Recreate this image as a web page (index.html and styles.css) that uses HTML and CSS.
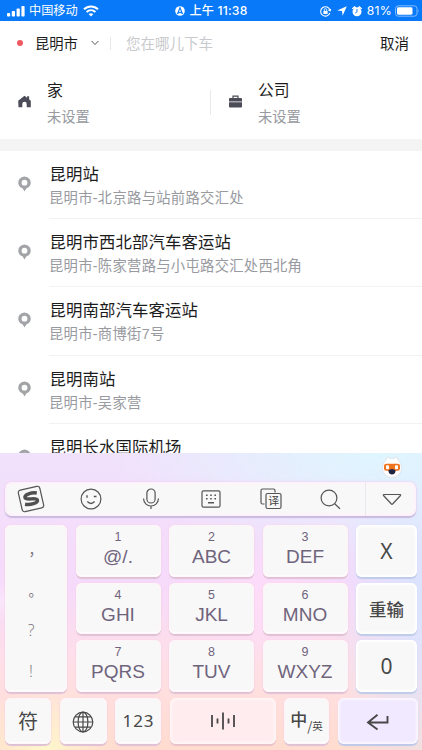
FILE: index.html
```html
<!DOCTYPE html>
<html lang="zh-CN">
<head>
<meta charset="utf-8">
<title>选择下车地点</title>
<link rel="stylesheet" href="styles.css">
</head>
<body>
<div class="screen">
  <header class="status">
    <div class="status-left">
      <svg width="19" height="12" viewBox="0 0 19 12" fill="#fff"><rect x="0" y="8" width="3.2" height="3.5" rx=".8"/><rect x="4.8" y="6" width="3.2" height="5.5" rx=".8"/><rect x="9.6" y="3.5" width="3.2" height="8" rx=".8"/><rect x="14.4" y="1" width="3.2" height="10.5" rx=".8"/></svg>
      <span class="carrier">中国移动</span>
      <svg class="wifi" width="16" height="12" viewBox="0 0 16 12" fill="none" stroke="#fff" stroke-width="2"><path d="M1 4.3C5 .4 11 .4 15 4.3M3.6 7C6.2 4.6 9.8 4.6 12.4 7"/><path d="M8 11.4 5.6 9C7 7.9 9 7.9 10.4 9z" fill="#fff" stroke="none"/></svg>
    </div>
    <div class="status-time">
      <svg width="10" height="10" viewBox="0 0 10 10"><circle cx="5" cy="5" r="4.8" fill="#fff"/><path d="M5 1.8 7.3 7.4 5 6.2 2.7 7.4z" fill="none" stroke="#0879f8" stroke-width="1.1"/></svg>
      <span>上午 11:38</span>
    </div>
    <div class="status-right">
      <svg width="11" height="11" viewBox="0 0 11 11" fill="none" stroke="#fff"><path d="M9.9 4.2A4.7 4.7 0 1 0 9.8 7M8.4 4l1.7.8.8-1.8" stroke-width="1.1"/><rect x="3.4" y="5" width="4.2" height="3" fill="#fff" stroke="none"/><path d="M4.3 5V3.8a1.2 1.2 0 0 1 2.4 0V5" stroke-width=".9"/></svg>
      <svg class="nav" width="10" height="10" viewBox="0 0 10 10"><path d="M9.8.2 5.6 9.8 5 5 .2 4.4z" fill="#fff"/></svg>
      <svg class="alarm" width="10" height="11" viewBox="0 0 10 11"><path d="M.2 2.6 2.6.4l1.1 1zM9.8 2.6 7.4.4l-1.1 1z" fill="#fff" stroke="#fff"/><circle cx="5" cy="5.8" r="4.5" fill="#fff"/><path d="M5 3v3l-1.8 1M1.5 9.5.9 10.5M8.5 9.5l.6 1" fill="none" stroke="#0879f8" stroke-width=".9"/></svg>
      <span>81%</span>
      <svg class="battery" width="25" height="12" viewBox="0 0 25 12"><rect x=".5" y=".8" width="21.5" height="10.4" rx="2.8" fill="none" stroke="#83bcff"/><rect x="2" y="2.3" width="15.5" height="7.4" rx="1.4" fill="#fff"/><path d="M23.3 4.2q1.3 1.8 0 3.6z" fill="#83bcff"/></svg>
    </div>
  </header>

  <div class="search">
    <i class="dot"></i>
    <span class="city">昆明市</span>
    <svg class="chev" width="8" height="6" viewBox="0 0 8 6" fill="none" stroke="#555"><path d="M.6 1 4 4.5 7.4 1"/></svg>
    <i class="bar"></i>
    <span class="hint">您在哪儿下车</span>
    <span class="cancel">取消</span>
  </div>

  <div class="shortcuts">
    <div class="shortcut">
      <svg width="13" height="13" viewBox="0 0 13 13"><path d="M.2 5.8 6.5.7l2.6 2V1.3h2v3l1.7 1.5v6.4H8.7V9a2.2 2.2 0 0 0-4.4 0v3.2H.5z" fill="#4b4c57"/></svg>
      <div><b>家</b><span>未设置</span></div>
    </div>
    <i class="split"></i>
    <div class="shortcut second">
      <svg width="13" height="13" viewBox="0 0 13 13"><path d="M4 3.5V1.2h5v2.3" fill="none" stroke="#4b4c57" stroke-width="1.2"/><path d="M0 4q0-.9.9-.9h11.2q.9 0 .9.9v2.5H0zM0 7.3h13v4.3q0 .9-.9.9H.9Q0 12.500 0 11.600z" fill="#4b4c57"/></svg>
      <div><b>公司</b><span>未设置</span></div>
    </div>
  </div>

  <main class="places">
    <div class="place"><svg class="pin" viewBox="0 0 13 16"><path d="M6.500 15.500 4.700 12.600A6.200 6.200 0 1 1 8.300 12.600z" fill="#a2a4a8"/><circle cx="6.500" cy="6.700" r="2.900" fill="#fff"/></svg><div class="info"><b>昆明站</b><span>昆明市-北京路与站前路交汇处</span></div></div>
    <div class="place"><svg class="pin" viewBox="0 0 13 16"><path d="M6.500 15.500 4.700 12.600A6.200 6.200 0 1 1 8.300 12.600z" fill="#a2a4a8"/><circle cx="6.500" cy="6.700" r="2.900" fill="#fff"/></svg><div class="info"><b>昆明市西北部汽车客运站</b><span>昆明市-陈家营路与小屯路交汇处西北角</span></div></div>
    <div class="place"><svg class="pin" viewBox="0 0 13 16"><path d="M6.500 15.500 4.700 12.600A6.200 6.200 0 1 1 8.300 12.600z" fill="#a2a4a8"/><circle cx="6.500" cy="6.700" r="2.900" fill="#fff"/></svg><div class="info"><b>昆明南部汽车客运站</b><span>昆明市-商博街7号</span></div></div>
    <div class="place"><svg class="pin" viewBox="0 0 13 16"><path d="M6.500 15.500 4.700 12.600A6.200 6.200 0 1 1 8.300 12.600z" fill="#a2a4a8"/><circle cx="6.500" cy="6.700" r="2.900" fill="#fff"/></svg><div class="info"><b>昆明南站</b><span>昆明市-吴家营</span></div></div>
    <div class="place"><svg class="pin" viewBox="0 0 13 16"><path d="M6.500 15.500 4.700 12.600A6.200 6.200 0 1 1 8.300 12.600z" fill="#a2a4a8"/><circle cx="6.500" cy="6.700" r="2.900" fill="#fff"/></svg><div class="info"><b>昆明长水国际机场</b></div></div>
  </main>

  <section class="keyboard">
    <div class="mascot">
      <svg width="20" height="22" viewBox="0 0 20 22"><path d="M4 4 5.200.800 8 2.400h4L14.800.800 16 4q3.500 3.500 3.500 8.500A9.500 9 0 0 1 .500 12.500Q.500 7.500 4 4z" fill="#fff" stroke="#d8d5df" stroke-width=".6"/><rect x="2" y="7.800" width="16" height="7" rx="2.200" fill="#ef7420"/><rect x="4" y="9.200" width="3" height="4" rx="1" fill="#fff"/><rect x="13" y="9.200" width="3" height="4" rx="1" fill="#fff"/><path d="M6.300 14.500q3.700-3 7.400 0-.5 4-3.700 4t-3.700-4z" fill="#1e2442"/></svg>
    </div>
    <div class="tools">
      <div class="tool"><svg width="28" height="28" viewBox="0 0 28 28"><g transform="rotate(-13 14 14)" fill="none"><rect x="3" y="3" width="22" height="22" rx="2.500" stroke="#555" stroke-width="1.200"/><path d="M21 9.500C16 7.600 8.500 8 8.500 11.300c0 3.500 11.500 1.800 11.500 5.200 0 3.200-8 3.200-13 1.200" stroke="#505050" stroke-width="3.500"/></g></svg></div>
      <div class="tool"><svg width="22" height="22" viewBox="0 0 22 22" fill="none" stroke="#555" stroke-width="1.200"><circle cx="11" cy="11" r="9.900"/><path d="M7 7.300v2.400M13.800 8.500h2.700M7.300 13.600q3.700 3.700 7.300 0" stroke-width="1.400"/></svg></div>
      <div class="tool"><svg width="18" height="22" viewBox="0 0 18 22" fill="none" stroke="#555" stroke-width="1.200"><rect x="4.900" y="1" width="8.200" height="14" rx="4.100"/><path d="M1.500 10.500c.5 10 14.500 10 15 0M9 18v3"/></svg></div>
      <div class="tool"><svg width="20" height="20" viewBox="0 0 20 20" fill="none" stroke="#555" stroke-width="1.200"><rect x="1" y="1.800" width="18" height="16.400" rx="1.500"/><path d="M5 6.300h1.600M9.200 6.300h1.600M13.400 6.300H15M5 9.800h1.600M9.200 9.800h1.600M13.400 9.800H15M7 13.800h6" stroke-width="1.600"/></svg></div>
      <div class="tool"><svg width="22" height="22" viewBox="0 0 22 22" fill="none" stroke="#555" stroke-width="1.200"><path d="M4.500 16H2.500q-1.500 0-1.500-1.500v-12Q1 1 2.500 1h11Q15 1 15 2.500v2"/><rect x="6" y="5.500" width="15" height="15" rx="1.500"/><text x="8.200" y="17" class="yi">译</text></svg></div>
      <div class="tool"><svg width="21" height="21" viewBox="0 0 21 21" fill="none" stroke="#555" stroke-width="1.200"><circle cx="9" cy="9" r="7.900"/><path d="m14.700 14.700 5.300 5"/></svg></div>
      <div class="tool last"><svg width="20" height="13" viewBox="0 0 20 13" fill="none" stroke="#555" stroke-width="1.200" stroke-linejoin="round"><path d="M2 1.500h16q1 .2.500 1L10.600 11q-.6.600-1.200 0L1.500 2.500q-.5-.8.500-1z"/></svg></div>
    </div>
    <div class="keys">
      <div class="key punct"><span>，</span><span>。</span><span>?</span><span>!</span></div>
      <div class="key letter"><small>1</small><span>@/.</span></div>
      <div class="key letter"><small>2</small><span>ABC</span></div>
      <div class="key letter"><small>3</small><span>DEF</span></div>
      <div class="key side">X</div>
      <div class="key letter"><small>4</small><span>GHI</span></div>
      <div class="key letter"><small>5</small><span>JKL</span></div>
      <div class="key letter"><small>6</small><span>MNO</span></div>
      <div class="key side redo">重输</div>
      <div class="key letter"><small>7</small><span>PQRS</span></div>
      <div class="key letter"><small>8</small><span>TUV</span></div>
      <div class="key letter"><small>9</small><span>WXYZ</span></div>
      <div class="key side">0</div>
    </div>
    <div class="bottom">
      <div class="key sym">符</div>
      <div class="key globe"><svg width="22" height="22" viewBox="0 0 22 22" fill="none" stroke="#484848" stroke-width="1.200"><circle cx="11" cy="11" r="9.800"/><ellipse cx="11" cy="11" rx="4.900" ry="9.800"/><path d="M11 1.200v19.600M1.200 11h19.600M3 5.800h16M3 16.200h16"/></svg></div>
      <div class="key num">123</div>
      <div class="key space"><svg width="26" height="18" viewBox="0 0 26 18" fill="none" stroke="#484848" stroke-width="1.800"><path d="M2 3v12M7.500 6.500v5M13 .5v17M18.500 6.500v5M24 3v12"/></svg></div>
      <div class="key lang"><span>中</span><em>/</em><small>英</small></div>
      <div class="key enter"><svg width="23" height="18" viewBox="0 0 23 18" fill="none" stroke="#484848" stroke-width="1.900"><path d="M21.500 3v6.500H2M11.500 1.800 2 9.500l9.500 7"/></svg></div>
    </div>
  </section>
</div>
</body>
</html>
```
FILE: styles.css
```css
* { box-sizing: border-box; }
body {
  margin: 0;
  font-family: "Liberation Sans", "Noto Sans CJK SC", sans-serif;
  color: #1c1c1c;
}
svg { display: block; flex: none; }
b { font-weight: 400; }
.screen {
  width: 422px;
  height: 750px;
  overflow: hidden;
  display: flex;
  flex-direction: column;
  background: #fff;
}

.status {
  height: 21px;
  flex: none;
  display: grid;
  grid-template-columns: 1fr auto 1fr;
  align-items: center;
  padding: 1px 7px 0;
  background: #0879f8;
  color: #fff;
  font-size: 12.2px;
  line-height: 20px;
  white-space: nowrap;
}
.status-left, .status-time, .status-right { display: flex; align-items: center; }
.carrier { margin-left: 3px; }
.wifi { margin-left: 5px; }
.status-time { gap: 5px; font-family: Inter, "Noto Sans CJK SC", sans-serif; font-weight: 500; letter-spacing: .15px; }
.status-right { justify-content: flex-end; font-family: Inter, sans-serif; }
.status-right > svg:first-child { margin-right: -3px; }
.nav { margin-left: 9px; }
.alarm { margin: 0 5px; }
.status-right span { letter-spacing: .3px; }
.battery { margin: 0 -5px 0 3px; }

.search {
  height: 44px;
  flex: none;
  display: flex;
  align-items: center;
  padding: 0 13px 0 17px;
  font-size: 14.3px;
}
.dot { width: 6px; height: 6px; border-radius: 50%; background: #ef5a62; }
.city { margin-left: 12px; }
.chev { margin-left: 13px; }
.bar { width: 1px; height: 13px; margin-left: 11px; background: #e8e8ea; }
.hint { margin-left: 15px; font-size: 14.5px; color: #c8cacd; }
.city, .hint, .cancel { position: relative; top: -.5px; }
.cancel { margin-left: auto; font-size: 14.5px; }

.shortcuts {
  height: 86px;
  flex: none;
  display: flex;
  align-items: flex-start;
  border-bottom: 12px solid #f4f4f5;
  padding: 14px 0 0 18px;
}
.shortcut { width: 192px; display: flex; align-items: flex-start; gap: 16px; }
.shortcut svg { margin-top: 16px; }
.shortcut b, .shortcut span { display: block; white-space: nowrap; }
.shortcut b { font-size: 15.8px; line-height: 24px; }
.shortcut span { font-size: 14.3px; line-height: 20px; margin-top: 4px; color: #989a9f; }
.second { margin-left: 18px; }
.split { width: 1px; height: 25px; margin-top: 11px; background: #e8e8ea; }

.places { height: 301.500px; flex: none; overflow: hidden; }
.place { height: 68.200px; display: flex; padding-left: 18px; }
.pin { width: 13px; height: 16px; margin: 25px 18px 0 0; }
.info { flex: 1; padding-top: 11px; border-bottom: 1px solid #f2f2f3; white-space: nowrap; }
.info b { display: block; font-size: 16.400px; line-height: 24px; letter-spacing: .1px; padding-left: .5px; }
.info span { display: block; font-size: 14.300px; line-height: 20px; margin-top: 2px; letter-spacing: .3px; color: #989a9f; }

.keyboard {
  flex: 1;
  padding: 0 5px;
  background:
    radial-gradient(circle at 45px 100%, #fff7cc, rgba(255, 240, 205, 0) 70px),
    radial-gradient(ellipse at 0 50%, #f9e6fb, rgba(249, 230, 251, 0) 60px),
    radial-gradient(ellipse at 62% 50%, #ffdcf8 0, rgba(255, 220, 248, 0) 105px),
    radial-gradient(ellipse 270px 110px at 90% 0, #def6ff, rgba(222, 246, 255, 0)),
    radial-gradient(ellipse 90px 220px at 100% 50%, #d9e4ff, rgba(217, 228, 255, 0)),
    linear-gradient(to bottom, #f1e2fb 0, #f6dafb 45%, #ffdfe6 72%, #ffdccf 100%);
}
.mascot { height: 29.500px; display: flex; justify-content: flex-end; padding: 3px 15px 0 0; }
.tools {
  height: 34px;
  display: flex;
  width: 411px;
  border-radius: 7px;
  background: #f9f8f9;
  box-shadow: inset 0 0 4px 1px #ffeefb, 0 1.500px 1px #c9bbdf, 0 0 3px #efc9ee;
}
.tool { width: 60px; display: flex; align-items: center; justify-content: center; }
.tool:first-child { width: 51px; margin-right: 4.500px; }
.tool.last { width: 51px; margin-left: auto; border-left: 1px solid #ebe5ed; padding-left: 1px; }
.yi { font: 11px "Noto Sans CJK SC", sans-serif; fill: #444; stroke: none; }

.keys {
  display: grid;
  grid-template-columns: 62px 85px 85px 85px 61px;
  grid-template-rows: repeat(3, 51.500px);
  column-gap: 8.500px;
  row-gap: 6px;
  margin-top: 9px;
}
.key {
  display: flex;
  align-items: center;
  justify-content: center;
  border-radius: 6px;
  background: #f9f8f8;
  color: #484848;
  box-shadow: inset 0 0 2px 1px #fff4f9, inset 0 -2px 1px #fff, 0 1.500px 1px #dfc1d5, 0 0 2px #f7d5e8;
}
.letter { flex-direction: column; justify-content: flex-start; padding-top: 4px; color: #6f647d; font-family: "Liberation Sans", sans-serif; }
.letter small { font-size: 12.500px; line-height: 16px; }
.letter span { font-size: 19px; line-height: 23px; }
.punct { grid-row: span 3; flex-direction: column; justify-content: flex-start; color: #767079; font-size: 15px; padding: 3px 10px 0 0; }
.punct span { height: 42px; display: flex; align-items: center; justify-content: center; width: 15px; }
.punct span:nth-child(-n+2) { font-family: "Noto Sans CJK SC", sans-serif; font-size: 14px; margin-left: 9px; }
.punct span:nth-child(n+3) { font: 300 16px "Open Sans", "Noto Sans", sans-serif; }
.punct span:nth-child(3) { margin-top: -1px; }
.side { font: 21px "Noto Sans", sans-serif; padding-bottom: 0; box-shadow: inset 0 0 2px 2px #fff, 0 1.500px 1px #becbe9, 0 0 2px #dce1fb; }
.redo { font: 500 17.500px "Noto Sans CJK SC", sans-serif; }
.bottom { display: grid; grid-template-columns: 46px 47px 46px 106px 45px 80px; column-gap: 8.500px; height: 46px; margin-top: 6px; }
.globe { padding-top: 3px; }
.sym { font: 400 20px "Noto Sans CJK SC", sans-serif; }
.num { font: 17px "Noto Sans", sans-serif; letter-spacing: 1px; padding-left: 1px; }
.space { background: #ffecef; box-shadow: inset 0 0 2px 2px #fff5f6, 0 1.500px 1px #e9c1c9; }
.lang { font-family: "Noto Sans CJK SC", sans-serif; }
.lang span { font-size: 17px; font-weight: 500; padding-bottom: 5px; }
.lang em { font-size: 13px; font-style: normal; padding-top: 9px; }
.lang small { font-size: 10.500px; padding-top: 10px; }
.enter { background: #f1e9ff; box-shadow: inset 0 0 2px 2px #faf6ff, 0 1.500px 1px #bec9e9; padding-top: 3px; }
```
